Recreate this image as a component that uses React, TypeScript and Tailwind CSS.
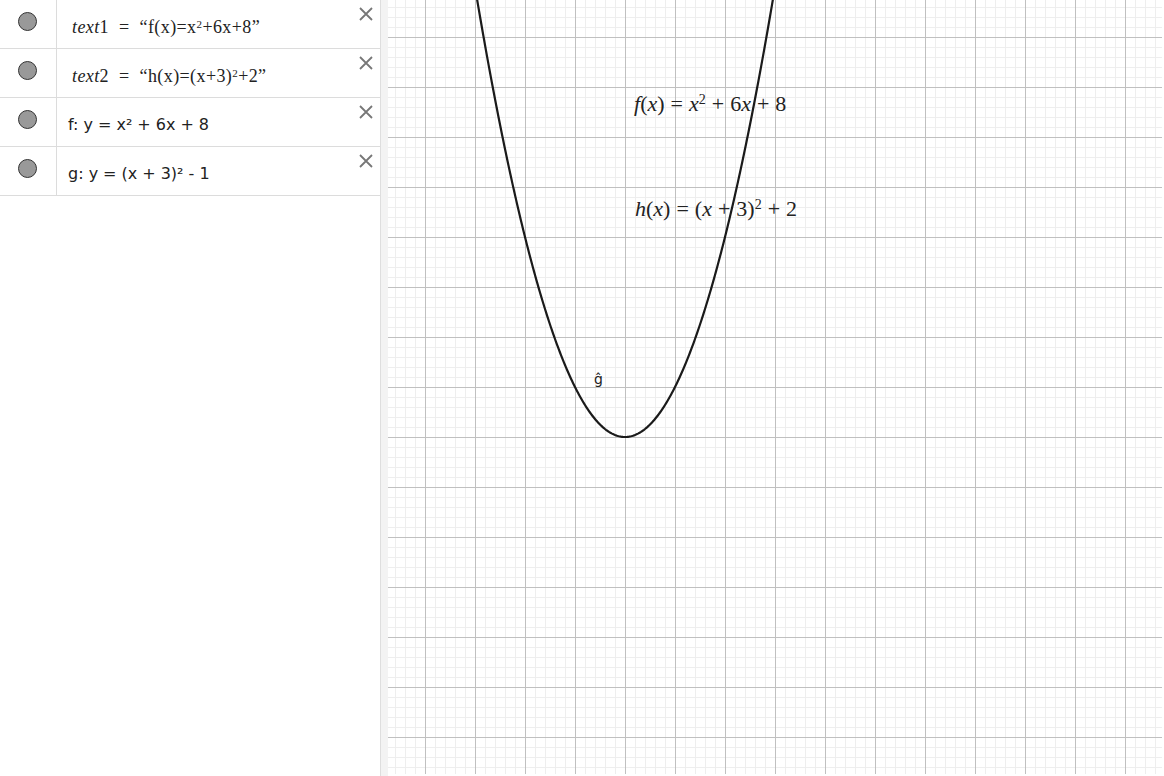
import React from "react";

const W = 776;
const H = 776;
const O = 387; // origin in local px
const U = 50; // px per unit

function Grid() {
  const minor: number[] = [];
  const major: number[] = [];
  for (let p = O % 10; p < W; p += 10) {
    if ((p - O) % 50 === 0) major.push(p);
    else minor.push(p);
  }
  const pts: string[] = [];
  for (let px = 80; px <= 400; px += 1) {
    const X = (px - O) / U;
    const Y = (X + 3) * (X + 3) - 1;
    const py = O - Y * U;
    pts.push(`${px},${py.toFixed(2)}`);
  }
  return (
    <svg width={W} height={H} className="block">
      <rect x={0} y={0} width={774} height={774} fill="#ffffff" />
      {minor.map((p) => (
        <g key={"m" + p}>
          {p <= 774 && <line x1={p + 0.5} y1={0} x2={p + 0.5} y2={774} stroke="#eeeeee" strokeWidth={1} />}
          {p <= 774 && <line x1={0} y1={p + 0.5} x2={774} y2={p + 0.5} stroke="#eeeeee" strokeWidth={1} />}
        </g>
      ))}
      {major.map((p) => (
        <g key={"M" + p}>
          <line x1={p + 0.5} y1={0} x2={p + 0.5} y2={774} stroke="#c0c0c0" strokeWidth={1} />
          <line x1={0} y1={p + 0.5} x2={774} y2={p + 0.5} stroke="#c0c0c0" strokeWidth={1} />
        </g>
      ))}
      <polyline points={pts.join(" ")} fill="none" stroke="#1a1a1a" strokeWidth={2.2} strokeLinejoin="round" />
    </svg>
  );
}

function Dot() {
  return <div className="w-[19px] h-[19px] rounded-full bg-[#999999] border border-[#333333]" />;
}

function CloseX() {
  return (
    <svg width="16" height="16" viewBox="0 0 16 16" className="block">
      <path d="M2 2 L14 14 M14 2 L2 14" stroke="#777777" strokeWidth="1.8" />
    </svg>
  );
}

function Row({ children, latex }: { children: React.ReactNode; latex?: boolean }) {
  return (
    <div className="flex h-[49px] border-b border-[#dcdcdc] relative">
      <div className="w-[57px] shrink-0 border-r border-[#dcdcdc] flex justify-center pt-[12px] pr-[1px]">
        <Dot />
      </div>
      <div className={latex ? "pl-[15px] pt-[15px]" : "pl-[11px] pt-[14px]"}>{children}</div>
      <div className="absolute right-[6px] top-[6px]">
        <CloseX />
      </div>
    </div>
  );
}

const serif = "font-['Liberation_Serif','Times_New_Roman',serif]";
const sans = "font-['DejaVu_Sans',Verdana,sans-serif]";

function Op({ c, w = 6 }: { c: string; w?: number }) {
  return <span className={w === 6 ? "mx-[6px]" : "mx-[5px]"}>{c}</span>;
}

export default function App() {
  return (
    <div className="flex w-[1164px] h-[776px] bg-white overflow-hidden">
      <div className="w-[380px] shrink-0 bg-white">
        <Row latex>
          <span className={`${serif} text-[18px] text-[#222] leading-none whitespace-nowrap tracking-[0.4px]`}>
            <i>text</i>1<span className="mx-[10px]">=</span>“f(x)=x<sup className="text-[11px]">2</sup>+6x+8”
          </span>
        </Row>
        <Row latex>
          <span className={`${serif} text-[18px] text-[#222] leading-none whitespace-nowrap tracking-[0.4px]`}>
            <i>text</i>2<span className="mx-[10px]">=</span>“h(x)=(x+3)<sup className="text-[11px]">2</sup>+2”
          </span>
        </Row>
        <Row>
          <span className={`${sans} text-[16px] text-[#222] leading-none whitespace-nowrap`}>
            f: y<Op c="=" w={5} />x²<Op c="+" w={5} />6x<Op c="+" w={5} />8
          </span>
        </Row>
        <Row>
          <span className={`${sans} text-[16px] text-[#222] leading-none whitespace-nowrap`}>
            g: y<Op c="=" w={5} />(x<Op c="+" w={5} />3)² - 1
          </span>
        </Row>
      </div>
      <div className="w-[8px] shrink-0 bg-[#f3f3f3] border-l border-[#dedede]" />
      <div className="relative w-[776px] h-[776px] shrink-0">
        <Grid />
        <div className={`absolute left-[246px] top-[93px] ${serif} text-[22px] text-[#222] leading-none whitespace-nowrap`}>
          <i>f</i>(<i>x</i>)<Op c="=" /><i>x</i>
          <sup className="text-[14px]">2</sup>
          <Op c="+" />6<i>x</i>
          <Op c="+" />8
        </div>
        <div className={`absolute left-[247px] top-[198px] ${serif} text-[22px] text-[#222] leading-none whitespace-nowrap`}>
          <i>h</i>(<i>x</i>)<Op c="=" />(<i>x</i>
          <Op c="+" />3)<sup className="text-[14px]">2</sup>
          <Op c="+" />2
        </div>
        <div className={`absolute left-[206px] top-[372px] ${sans} text-[14px] text-[#222] leading-none`}>
          ĝ
        </div>
      </div>
    </div>
  );
}
